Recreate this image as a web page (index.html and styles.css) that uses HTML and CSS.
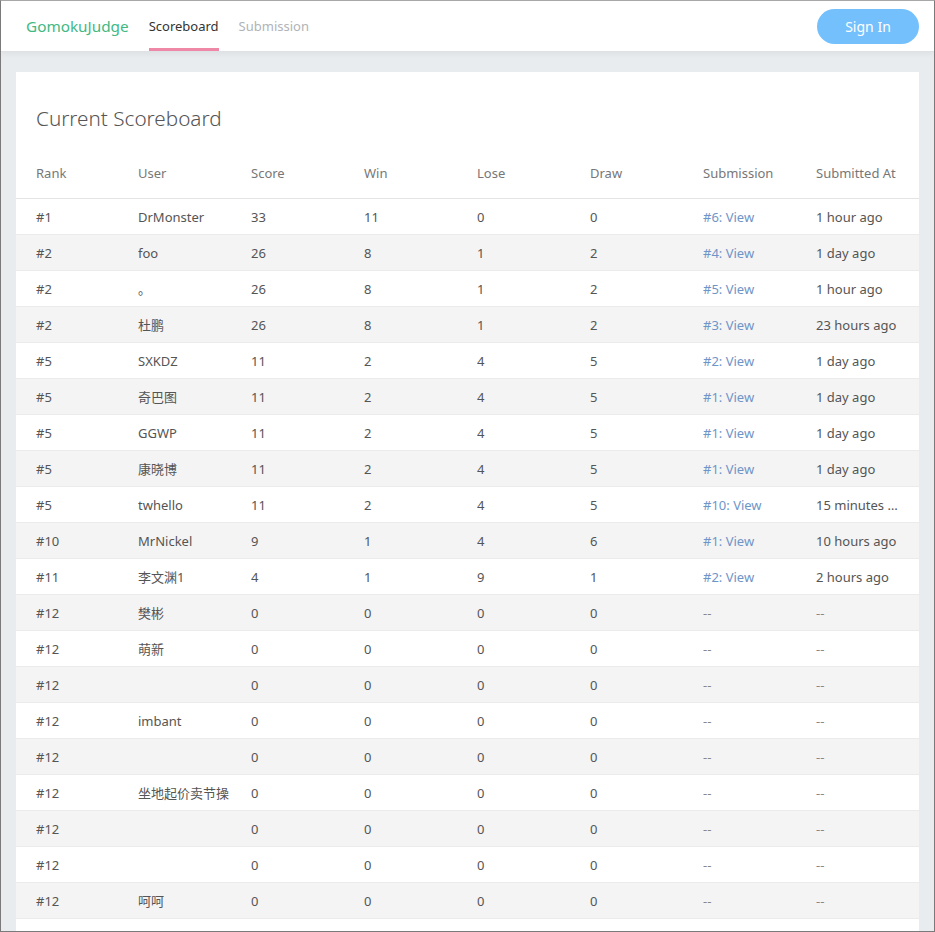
FILE: index.html
```html
<!DOCTYPE html>
<html>
<head>
<meta charset="utf-8">
<title>GomokuJudge</title>
<link rel="stylesheet" href="styles.css">
</head>
<body>
<div class="frame">
  <header class="nav">
    <div class="nav-left">
      <a class="brand">GomokuJudge</a>
      <a class="nav-item active">Scoreboard</a>
      <a class="nav-item">Submission</a>
    </div>
    <button class="signin">Sign In</button>
  </header>
  <main class="container">
    <section class="card">
      <h1 class="title">Current Scoreboard</h1>
      <table class="board">
        <colgroup>
          <col class="c1"><col class="cn"><col class="cn"><col class="cn"><col class="cn"><col class="cn"><col class="cn"><col class="clast">
        </colgroup>
        <thead>
          <tr><th>Rank</th><th>User</th><th>Score</th><th>Win</th><th>Lose</th><th>Draw</th><th>Submission</th><th>Submitted At</th></tr>
        </thead>
        <tbody>
          <tr><td>#1</td><td>DrMonster</td><td>33</td><td>11</td><td>0</td><td>0</td><td><a class="link">#6: View</a></td><td>1 hour ago</td></tr>
          <tr><td>#2</td><td>foo</td><td>26</td><td>8</td><td>1</td><td>2</td><td><a class="link">#4: View</a></td><td>1 day ago</td></tr>
          <tr><td>#2</td><td>。</td><td>26</td><td>8</td><td>1</td><td>2</td><td><a class="link">#5: View</a></td><td>1 hour ago</td></tr>
          <tr><td>#2</td><td>杜鹏</td><td>26</td><td>8</td><td>1</td><td>2</td><td><a class="link">#3: View</a></td><td>23 hours ago</td></tr>
          <tr><td>#5</td><td>SXKDZ</td><td>11</td><td>2</td><td>4</td><td>5</td><td><a class="link">#2: View</a></td><td>1 day ago</td></tr>
          <tr><td>#5</td><td>奇巴图</td><td>11</td><td>2</td><td>4</td><td>5</td><td><a class="link">#1: View</a></td><td>1 day ago</td></tr>
          <tr><td>#5</td><td>GGWP</td><td>11</td><td>2</td><td>4</td><td>5</td><td><a class="link">#1: View</a></td><td>1 day ago</td></tr>
          <tr><td>#5</td><td>康晓博</td><td>11</td><td>2</td><td>4</td><td>5</td><td><a class="link">#1: View</a></td><td>1 day ago</td></tr>
          <tr><td>#5</td><td>twhello</td><td>11</td><td>2</td><td>4</td><td>5</td><td><a class="link">#10: View</a></td><td>15 minutes ago</td></tr>
          <tr><td>#10</td><td>MrNickel</td><td>9</td><td>1</td><td>4</td><td>6</td><td><a class="link">#1: View</a></td><td>10 hours ago</td></tr>
          <tr><td>#11</td><td>李文渊1</td><td>4</td><td>1</td><td>9</td><td>1</td><td><a class="link">#2: View</a></td><td>2 hours ago</td></tr>
          <tr><td>#12</td><td>樊彬</td><td>0</td><td>0</td><td>0</td><td>0</td><td class="dash">--</td><td class="dash">--</td></tr>
          <tr><td>#12</td><td>萌新</td><td>0</td><td>0</td><td>0</td><td>0</td><td class="dash">--</td><td class="dash">--</td></tr>
          <tr><td>#12</td><td></td><td>0</td><td>0</td><td>0</td><td>0</td><td class="dash">--</td><td class="dash">--</td></tr>
          <tr><td>#12</td><td>imbant</td><td>0</td><td>0</td><td>0</td><td>0</td><td class="dash">--</td><td class="dash">--</td></tr>
          <tr><td>#12</td><td></td><td>0</td><td>0</td><td>0</td><td>0</td><td class="dash">--</td><td class="dash">--</td></tr>
          <tr><td>#12</td><td>坐地起价卖节操</td><td>0</td><td>0</td><td>0</td><td>0</td><td class="dash">--</td><td class="dash">--</td></tr>
          <tr><td>#12</td><td></td><td>0</td><td>0</td><td>0</td><td>0</td><td class="dash">--</td><td class="dash">--</td></tr>
          <tr><td>#12</td><td></td><td>0</td><td>0</td><td>0</td><td>0</td><td class="dash">--</td><td class="dash">--</td></tr>
          <tr><td>#12</td><td>呵呵</td><td>0</td><td>0</td><td>0</td><td>0</td><td class="dash">--</td><td class="dash">--</td></tr>
        </tbody>
      </table>
    </section>
  </main>
</div>
</body>
</html>
```

FILE: styles.css
```css
html, body {
  margin: 0;
  padding: 0;
}
body {
  font-family: "Noto Sans", "Noto Sans CJK SC", sans-serif;
  color: #555;
  background: #fff;
}
.frame {
  height: 100vh;
  box-sizing: border-box;
  border: 1px solid #7a7a7a;
  border-top-color: #a8a8a8;
  background: #e9ecef;
  overflow: hidden;
}
.nav {
  height: 50px;
  background: #fff;
  border-bottom: 1px solid #dfe2e5;
  box-shadow: 0 2px 6px rgba(0, 0, 0, 0.05);
  display: flex;
  align-items: stretch;
  justify-content: space-between;
  padding: 0 15px 0 25px;
  position: relative;
}
.nav-left {
  display: flex;
  align-items: stretch;
  gap: 20px;
}
.brand, .nav-item {
  display: flex;
  align-items: center;
  text-decoration: none;
  box-sizing: border-box;
}
.brand {
  color: #42b983;
  font-size: 15.3px;
  padding-bottom: 1px;
}
.nav-item {
  color: #b0b3b8;
  font-size: 13px;
  border-bottom: 3px solid transparent;
  padding-top: 2px;
}
.nav-item.active {
  color: #333;
  border-bottom-color: #ee88a6;
}
.signin {
  align-self: flex-start;
  margin-top: 8px;
  width: 102px;
  height: 35px;
  border: none;
  border-radius: 18px;
  background: #74c0fc;
  color: #fff;
  font-family: "Noto Sans", sans-serif;
  font-size: 14px;
}
.container {
  padding: 20px 15px 0;
}
.card {
  background: #fff;
  padding: 31px 0 40px;
}
.title {
  margin: 0 0 2px;
  padding-left: 20px;
  font-weight: 300;
  font-size: 20.7px;
  line-height: 30px;
  color: #555;
}
.board {
  width: 100%;
  table-layout: fixed;
  border-collapse: collapse;
  font-size: 13px;
}
.c1 { width: 122px; }
.cn { width: 113px; }
.clast { width: 103px; }
.board th {
  height: 47px;
  vertical-align: bottom;
  padding: 0 0 16px;
  text-align: left;
  font-weight: 400;
  color: #777;
  line-height: 18px;
  border-bottom: 1px solid #e3e3e3;
}
.board td {
  height: 35px;
  padding: 0;
  line-height: 18px;
  color: #555;
  border-top: 1px solid #ebebeb;
  white-space: nowrap;
  overflow: hidden;
  text-overflow: ellipsis;
}
.board tbody tr:last-child td {
  border-bottom: 1px solid #ebebeb;
}
.board th:first-child, .board td:first-child {
  padding-left: 20px;
}
.board th:last-child, .board td:last-child {
  padding-right: 18px;
}
.board tbody tr:nth-child(even) td {
  background: #f4f4f4;
}
.link {
  color: #6f95c8;
  text-decoration: none;
}
.board td.dash {
  color: #888;
}
```
